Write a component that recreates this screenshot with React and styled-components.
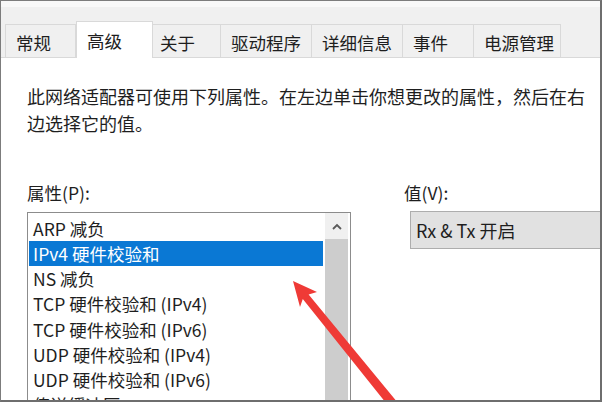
import React from "react";
import styled, { createGlobalStyle } from "styled-components";

const Global = createGlobalStyle`
  html, body { margin: 0; padding: 0; background: #fff; }
  body { font-family: "Noto Sans CJK SC", "Noto Sans", sans-serif; color: #1e1e1e; }
`;

const Frame = styled.div`
  position: relative;
  width: 602px;
  height: 402px;
  box-sizing: border-box;
  border-top: 1px solid #7c7c7c;
  border-left: 1px solid #7c7c7c;
  border-right: 2px solid #6e6e6e;
  border-bottom: 2px solid #6e6e6e;
  background: #fff;
  overflow: hidden;
`;

const TabBar = styled.div`
  height: 57px;
  box-sizing: border-box;
  background: linear-gradient(#f8f8f8 0 6px, #f0f0f0 6px);
  border-bottom: 1px solid #d9d9d9;
  display: flex;
  align-items: flex-end;
  padding-left: 4px;
`;

const Tab = styled.div`
  box-sizing: border-box;
  width: ${(p) => p.$w}px;
  height: ${(p) => (p.$active ? 37 : 33)}px;
  margin-bottom: ${(p) => (p.$active ? -1 : 0)}px;
  padding-left: ${(p) => p.$pl ?? 10}px;
  background: ${(p) => (p.$active ? "#ffffff" : "#f0f0f0")};
  border: 1px solid #d9d9d9;
  border-bottom: none;
  border-left-width: ${(p) => (p.$first || p.$active ? 1 : 0)}px;
  display: flex;
  align-items: center;
  padding-top: ${(p) => (p.$active ? 0 : 3)}px;
  font-size: 17.5px;
  color: #1e1e1e;
  position: relative;
  z-index: ${(p) => (p.$active ? 1 : 0)};
`;

const Body = styled.div`
  padding: 25px 0 0 26px;
`;

const Intro = styled.p`
  margin: 0;
  width: 570px;
  font-size: 18px;
  line-height: 27px;
`;

const Columns = styled.div`
  display: flex;
  gap: 53px;
  margin-top: 42px;
`;

const LeftCol = styled.div`
  width: 324px;
  flex: none;
`;

const RightCol = styled.div`
  flex: 1;
`;

const Label = styled.div`
  font-size: 17.5px;
  line-height: 27px;
  height: 27px;
`;

const ListBox = styled.div`
  margin-top: 6px;
  width: 324px;
  height: 200px;
  box-sizing: border-box;
  border: 1px solid #8c8c8c;
  padding: 0 2px 0 1px;
  display: flex;
`;

const Items = styled.div`
  flex: 1;
  padding-top: 2.5px;
  margin-right: 2px;
`;

const Item = styled.div`
  height: 25.25px;
  display: flex;
  align-items: center;
  padding-left: 4px;
  font-size: 17.5px;
  white-space: nowrap;
  background: ${(p) => (p.$selected ? "#0a78d4" : "transparent")};
  color: ${(p) => (p.$selected ? "#ffffff" : "#1e1e1e")};
`;

const ScrollBar = styled.div`
  width: 23px;
  flex: none;
  display: flex;
  flex-direction: column;
  background: #cdcdcd;
`;

const ScrollButton = styled.div`
  height: 26px;
  background: #f0f0f0;
  display: flex;
  align-items: center;
  justify-content: center;
`;

const ValueBox = styled.div`
  margin: 5px 0 0 6px;
  height: 38px;
  box-sizing: border-box;
  border: 1px solid #adadad;
  border-right: none;
  background: #e1e1e1;
  display: flex;
  align-items: center;
  padding-left: 5px;
  font-size: 18px;
`;

const Arrow = styled.svg`
  position: absolute;
  left: -1px;
  top: -1px;
  pointer-events: none;
`;

const tabs = [
  { t: "常规", w: 71, first: true },
  { t: "高级", w: 77, active: true },
  { t: "关于", w: 68, pl: 7 },
  { t: "驱动程序", w: 91 },
  { t: "详细信息", w: 91 },
  { t: "事件", w: 71 },
  { t: "电源管理", w: 87 },
];

const items = [
  "ARP 减负",
  "IPv4 硬件校验和",
  "NS 减负",
  "TCP 硬件校验和 (IPv4)",
  "TCP 硬件校验和 (IPv6)",
  "UDP 硬件校验和 (IPv4)",
  "UDP 硬件校验和 (IPv6)",
  "传送缓冲区",
];

export default function App() {
  return (
    <>
      <Global />
      <Frame>
        <TabBar>
          {tabs.map((tab) => (
            <Tab key={tab.t} $w={tab.w} $active={tab.active} $first={tab.first} $pl={tab.pl}>
              {tab.t}
            </Tab>
          ))}
        </TabBar>
        <Body>
          <Intro>
            此网络适配器可使用下列属性。在左边单击你想更改的属性，然后在右边选择它的值。
          </Intro>
          <Columns>
            <LeftCol>
              <Label>属性(P):</Label>
              <ListBox>
                <Items>
                  {items.map((it, i) => (
                    <Item key={it} $selected={i === 1}>
                      {it}
                    </Item>
                  ))}
                </Items>
                <ScrollBar>
                  <ScrollButton>
                    <svg width="10" height="7" viewBox="0 0 10 7">
                      <polyline points="1,6 5,2 9,6" fill="none" stroke="#5a5a5a" strokeWidth="1.8" />
                    </svg>
                  </ScrollButton>
                </ScrollBar>
              </ListBox>
            </LeftCol>
            <RightCol>
              <Label>值(V):</Label>
              <ValueBox>Rx &amp; Tx 开启</ValueBox>
            </RightCol>
          </Columns>
        </Body>
        <Arrow width="602" height="402" viewBox="0 0 602 402">
          <polygon
            points="293,281 317,292 308.6,294.6 398.8,404 390.8,409 302.8,299 300,307"
            fill="#ef3a36"
          />
        </Arrow>
      </Frame>
    </>
  );
}
